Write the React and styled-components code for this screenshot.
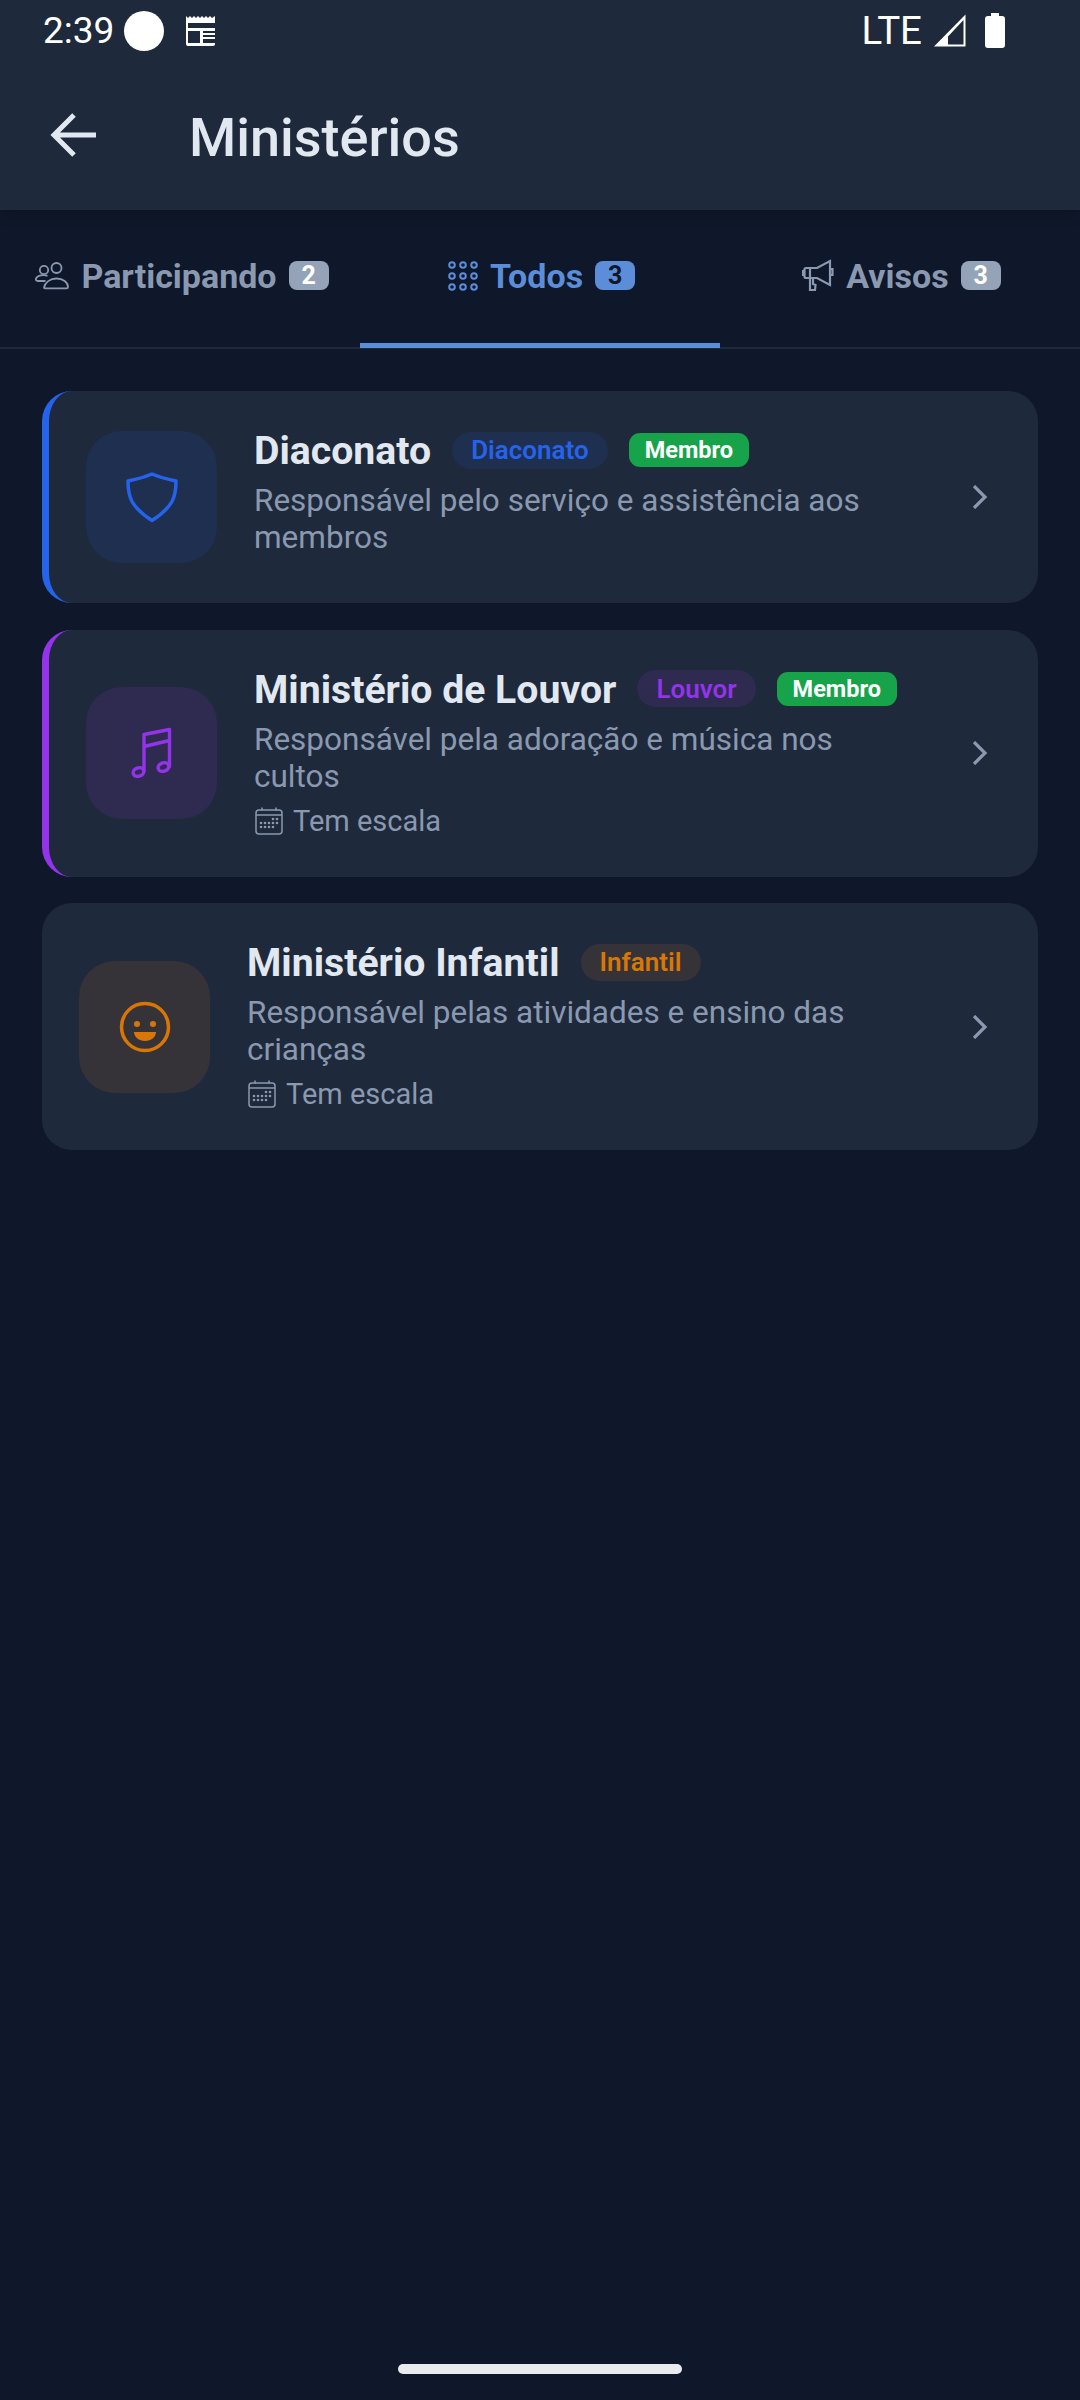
import React from "react";
import styled, { createGlobalStyle } from "styled-components";

const GlobalStyle = createGlobalStyle`
  html, body {
    margin: 0;
    padding: 0;
    background: #0f172a;
    font-family: Roboto, "Noto Sans", sans-serif;
  }
`;

const Page = styled.div`
  width: 1080px;
  height: 2400px;
  display: flex;
  flex-direction: column;
  background: #0f172a;
  overflow: hidden;
`;

const Header = styled.header`
  position: relative;
  z-index: 2;
  height: 210px;
  background: #1e293b;
  box-shadow: 0 3px 12px rgba(0, 0, 0, 0.25);
`;

const StatusBar = styled.div`
  height: 60px;
  display: flex;
  align-items: center;
  padding: 0 75px 0 43px;
  color: #fff;
`;

const StatusLeft = styled.div`
  display: flex;
  align-items: center;
  flex: 1;
`;

const Dot = styled.span`
  width: 40px;
  height: 40px;
  border-radius: 50%;
  background: #fff;
  margin: 2px 21px 0 10px;
`;

const StatusText = styled.span`
  line-height: 60px;
  padding-top: 2px;
  font-size: ${(p) => p.$size}px;
`;

const StatusRight = styled.div`
  display: flex;
  align-items: center;
  gap: 12px;

  svg:last-child {
    margin-left: 7px;
  }
`;

const AppBar = styled.div`
  height: 150px;
  display: flex;
  align-items: center;
  padding-left: 49px;
`;

const Title = styled.h1`
  margin: 4px 0 0 92px;
  font-size: 54px;
  font-weight: 500;
  color: #e2e8f0;
`;

const Tabs = styled.nav`
  height: 137px;
  display: flex;
  border-bottom: 2px solid #1e293b;
`;

const Tab = styled.div`
  flex: 1;
  display: flex;
  align-items: center;
  justify-content: center;
  gap: 12px;
  padding: 0 0 2px 3px;
  color: ${(p) => (p.$active ? "#5b8dd9" : "#8a99b0")};
  border-bottom: 5px solid ${(p) => (p.$active ? "#5b8dd9" : "transparent")};
  margin-bottom: -1px;
`;

const TabLabel = styled.span`
  font-size: 34px;
  font-weight: 700;
`;

const TabBadge = styled.span`
  width: 40px;
  height: 29px;
  border-radius: 8px;
  display: flex;
  align-items: center;
  justify-content: center;
  font-size: 25px;
  font-weight: 700;
  background: ${(p) => (p.$active ? "#5b8dd9" : "#94a3b8")};
  color: ${(p) => (p.$active ? "#0f172a" : "#fff")};
`;

const List = styled.main`
  flex: 1;
  display: flex;
  flex-direction: column;
  gap: 26.5px;
  padding: 42px 42px 0;
`;

const Card = styled.article`
  display: flex;
  align-items: center;
  background: #1e293b;
  border-radius: 30px;
  border-left: ${(p) => (p.$accent ? `7px solid ${p.$accent}` : "0")};
  padding: 40px 37px;
`;

const IconBox = styled.div`
  width: 131px;
  height: 132px;
  flex: none;
  border-radius: 36px;
  display: flex;
  align-items: center;
  justify-content: center;
  background: ${(p) => p.$bg};
  color: ${(p) => p.$color};
`;

const Body = styled.div`
  flex: 1;
  min-width: 0;
  align-self: flex-start;
  margin: 0 50px 0 37px;
`;

const TitleRow = styled.div`
  height: 38px;
  display: flex;
  align-items: center;
  gap: 21px;
  margin-bottom: 13px;
`;

const CardTitle = styled.h2`
  margin: 2px 0 0;
  font-size: 39.2px;
  font-weight: 700;
  color: #e2e8f0;
  white-space: nowrap;
`;

const TagRow = styled.div`
  display: flex;
  align-items: center;
  gap: 21px;
`;

const TypeTag = styled.span`
  height: 37px;
  padding: 0 19px;
  border-radius: 19px;
  display: flex;
  align-items: center;
  font-size: 26px;
  font-weight: 600;
  background: ${(p) => p.$bg};
  color: ${(p) => p.$color};
`;

const MemberTag = styled.span`
  height: 34px;
  padding: 0 16px;
  border-radius: 11px;
  display: flex;
  align-items: center;
  font-size: 23.5px;
  font-weight: 700;
  background: #16a34a;
  color: #fff;
`;

const Description = styled.p`
  margin: 0;
  font-size: 31.5px;
  line-height: 37px;
  color: #8a99b0;
`;

const Meta = styled.div`
  display: flex;
  align-items: center;
  gap: 10px;
  margin: 10px 0 0 1px;
  height: 32px;
  font-size: 29px;
  color: #8a99b0;
`;

const Chevron = styled.div`
  width: 42px;
  display: flex;
  justify-content: center;
  color: #8a99b0;
  flex: none;
`;

const HomeBar = styled.div`
  flex: none;
  width: 284px;
  height: 10px;
  border-radius: 5px;
  background: #e9ebee;
  margin: 0 auto 26px;
`;

const NewsIcon = () => (
  <svg width="33" height="31" viewBox="0 0 33 31" fill="#fff">
    <path
      fillRule="evenodd"
      d="M1 1l2 2 2-2 2 2 2-2 2 2 2-2 2 2 2-2 2 2 2-2 2 2 2-2 2 2 3-2v28a2 2 0 0 1-2 2H3a2 2 0 0 1-2-2V1zm2 7v5h27V8H3zm0 8v12h12V16H3zm15 0v2h12v-2H18zm0 4v2h12v-2H18zm0 4v4h12v-4H18z"
    />
  </svg>
);

const SignalIcon = () => (
  <svg width="32" height="33" viewBox="0 0 32 33" fill="#fff">
    <path fillRule="evenodd" d="M31.5 0.5V32.5H0L31.5 0.5zM29.5 6L14 22.500V30.500H29.500V6z" />
  </svg>
);

const BatteryIcon = () => (
  <svg width="20" height="35" viewBox="0 0 20 35" fill="#fff">
    <path d="M6 0h8v3h3a3 3 0 0 1 3 3v26a3 3 0 0 1-3 3H3a3 3 0 0 1-3-3V6a3 3 0 0 1 3-3h3V0z" />
  </svg>
);

const BackIcon = () => (
  <svg width="48" height="48" viewBox="0 0 48 48" fill="none" stroke="#e2e8f0" strokeWidth="5">
    <path d="M47 24H5M25 4L5 24l20 20" />
  </svg>
);

const UsersIcon = () => (
  <svg width="35" height="28" viewBox="0 0 34 28" fill="none" stroke="currentColor" strokeWidth="1.8">
    <circle cx="9.500" cy="8" r="4.200" />
    <circle cx="22" cy="6" r="5" />
    <path d="M11 19H4c-2 0-3-1-2.600-2.300C2.500 14.500 5 13.200 9 13.200c1.500 0 2.800.2 4 .6" />
    <path d="M9.500 25.500c1-5 6-9 12.500-9s11.500 4 11.500 8.500c0 .8-.5 1.300-1.500 1.300H10.500c-.7 0-1-.3-1-.8z" />
  </svg>
);

const GridIcon = () => {
  const dots = [];
  [4, 15, 26].forEach((y) =>
    [4, 15, 26].forEach((x) => dots.push(<circle key={`${x}-${y}`} cx={x} cy={y} r="2.800" />))
  );
  return (
    <svg width="30" height="30" viewBox="0 0 30 30" fill="none" stroke="currentColor" strokeWidth="2">
      {dots}
    </svg>
  );
};

const MegaphoneIcon = () => (
  <svg width="32" height="33" viewBox="0 0 32 33" fill="none" stroke="currentColor" strokeWidth="2.200">
    <path d="M4 9h11l13-7v24l-13-7H4a1.500 1.500 0 0 1-1.500-1.500v-7A1.500 1.500 0 0 1 4 9z" />
    <path d="M28 10h2.500v6H28M2.500 12H1v4h1.500M8 9v10M8 19v12h5l.5-5-2.500-1v-6" />
  </svg>
);

const ShieldIcon = () => (
  <svg width="52" height="52" viewBox="0 0 52 52" fill="none" stroke="currentColor" strokeWidth="3.500" strokeLinejoin="round">
    <path d="M26 2c-7 3-12 4.500-24 7 0 8 .5 14 4 20.500 4 7 10.500 13 20 19 9.500-6 16-12 20-19 3.500-6.500 4-12.500 4-20.500C38 6.500 33 5 26 2z" transform="translate(0 1)" />
  </svg>
);

const MusicIcon = () => (
  <svg width="44" height="52" viewBox="-2 -1 44 52" fill="none" stroke="currentColor" strokeWidth="3.400" strokeLinejoin="round" strokeLinecap="round">
    <path d="M12 43V6.500L37.500 1.500V38.500M12 18.500L37.500 12.500" />
    <ellipse cx="6.500" cy="44" rx="5.500" ry="4.200" transform="rotate(-20 6.500 44)" />
    <ellipse cx="31.500" cy="39" rx="5.500" ry="4.200" transform="rotate(-20 31.500 39)" />
  </svg>
);

const SmileIcon = () => (
  <svg width="52" height="52" viewBox="0 0 52 52" fill="none" stroke="currentColor" strokeWidth="3.500">
    <circle cx="26" cy="26" r="23.500" />
    <circle cx="18" cy="23" r="3" fill="currentColor" stroke="none" />
    <circle cx="34" cy="23" r="3" fill="currentColor" stroke="none" />
    <path d="M15 31h22c0 5-5 9-11 9s-11-4-11-9z" fill="currentColor" stroke="none" />
  </svg>
);

const CalendarIcon = () => {
  const cells = [
    [18, 12], [22, 12],
    [6, 16], [10, 16], [14, 16], [18, 16], [22, 16],
    [6, 20], [10, 20], [14, 20], [18, 20],
  ];
  return (
    <svg width="28" height="28" viewBox="0 0 28 28" fill="none" stroke="currentColor" strokeWidth="1.500">
      <rect x="1" y="3" width="26" height="24" rx="3" />
      <path d="M1 8h26M7 0.500v3M21 0.500v3" />
      {cells.map(([x, y]) => (
        <circle key={`${x}-${y}`} cx={x} cy={y} r="1.300" fill="currentColor" stroke="none" />
      ))}
    </svg>
  );
};

const ChevronIcon = () => (
  <svg width="16" height="24" viewBox="0 0 16 24" fill="none" stroke="currentColor" strokeWidth="3.200">
    <path d="M2 1l11 11L2 23" />
  </svg>
);

export default function App() {
  return (
    <>
      <GlobalStyle />
      <Page>
        <Header>
          <StatusBar>
            <StatusLeft>
              <StatusText $size={37}>2:39</StatusText>
              <Dot />
              <NewsIcon />
            </StatusLeft>
            <StatusRight>
              <StatusText $size={38.5}>LTE</StatusText>
              <SignalIcon />
              <BatteryIcon />
            </StatusRight>
          </StatusBar>
          <AppBar>
            <BackIcon />
            <Title>Ministérios</Title>
          </AppBar>
        </Header>

        <Tabs>
          <Tab>
            <UsersIcon />
            <TabLabel>Participando</TabLabel>
            <TabBadge>2</TabBadge>
          </Tab>
          <Tab $active>
            <GridIcon />
            <TabLabel>Todos</TabLabel>
            <TabBadge $active>3</TabBadge>
          </Tab>
          <Tab>
            <MegaphoneIcon />
            <TabLabel>Avisos</TabLabel>
            <TabBadge>3</TabBadge>
          </Tab>
        </Tabs>

        <List>
          <Card $accent="#2563eb">
            <IconBox $bg="#1e2f50" $color="#2563eb">
              <ShieldIcon />
            </IconBox>
            <Body>
              <TitleRow>
                <CardTitle>Diaconato</CardTitle>
                <TagRow>
                  <TypeTag $bg="#1e2f50" $color="#2563eb">Diaconato</TypeTag>
                  <MemberTag>Membro</MemberTag>
                </TagRow>
              </TitleRow>
              <Description>Responsável pelo serviço e assistência aos membros</Description>
            </Body>
            <Chevron>
              <ChevronIcon />
            </Chevron>
          </Card>

          <Card $accent="#9333ea">
            <IconBox $bg="#2e2a50" $color="#9333ea">
              <MusicIcon />
            </IconBox>
            <Body>
              <TitleRow>
                <CardTitle>Ministério de Louvor</CardTitle>
                <TagRow>
                  <TypeTag $bg="#2e2a50" $color="#9333ea">Louvor</TypeTag>
                  <MemberTag>Membro</MemberTag>
                </TagRow>
              </TitleRow>
              <Description>Responsável pela adoração e música nos cultos</Description>
              <Meta>
                <CalendarIcon />
                Tem escala
              </Meta>
            </Body>
            <Chevron>
              <ChevronIcon />
            </Chevron>
          </Card>

          <Card>
            <IconBox $bg="#353338" $color="#d97706">
              <SmileIcon />
            </IconBox>
            <Body>
              <TitleRow>
                <CardTitle>Ministério Infantil</CardTitle>
                <TagRow>
                  <TypeTag $bg="#353338" $color="#d97706">Infantil</TypeTag>
                </TagRow>
              </TitleRow>
              <Description>Responsável pelas atividades e ensino das crianças</Description>
              <Meta>
                <CalendarIcon />
                Tem escala
              </Meta>
            </Body>
            <Chevron>
              <ChevronIcon />
            </Chevron>
          </Card>
        </List>

        <HomeBar />
      </Page>
    </>
  );
}
